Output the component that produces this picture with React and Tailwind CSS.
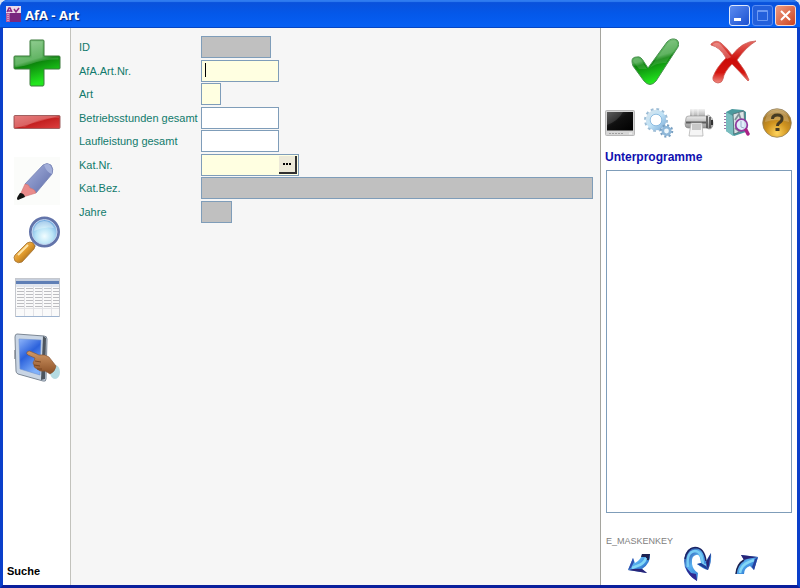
import React from "react";

function Gradients() {
  return (
    <svg className="absolute h-0 w-0" aria-hidden="true">
      <defs>
        <linearGradient id="green" x1="0" y1="0" x2="0.3" y2="1">
          <stop offset="0" stopColor="#8ccb8c" />
          <stop offset="0.5" stopColor="#4aa94c" />
          <stop offset="0.58" stopColor="#0c850c" />
          <stop offset="1" stopColor="#22e61e" />
        </linearGradient>
        <linearGradient id="red" x1="0" y1="0" x2="1" y2="1">
          <stop offset="0" stopColor="#e06a6a" />
          <stop offset="0.48" stopColor="#d64a4a" />
          <stop offset="0.52" stopColor="#c42020" />
          <stop offset="1" stopColor="#dc4040" />
        </linearGradient>
        <linearGradient id="cross" x1="0" y1="0" x2="0" y2="1">
          <stop offset="0" stopColor="#e66a62" />
          <stop offset="0.45" stopColor="#cc0c08" />
          <stop offset="0.75" stopColor="#d41610" />
          <stop offset="1" stopColor="#f08a80" />
        </linearGradient>
        <linearGradient id="pencil" x1="0" y1="0" x2="1" y2="1">
          <stop offset="0" stopColor="#a9b4de" />
          <stop offset="0.5" stopColor="#8390c4" />
          <stop offset="1" stopColor="#5c6aa6" />
        </linearGradient>
        <radialGradient id="lens" cx="0.5" cy="0.65" r="0.6">
          <stop offset="0" stopColor="#f2fdff" />
          <stop offset="0.5" stopColor="#b9e4f7" />
          <stop offset="1" stopColor="#6aa4dc" />
        </radialGradient>
        <linearGradient id="wood" x1="0" y1="0" x2="1" y2="1">
          <stop offset="0" stopColor="#ffd488" />
          <stop offset="0.5" stopColor="#e09a2c" />
          <stop offset="1" stopColor="#73430d" />
        </linearGradient>
        <linearGradient id="screen" x1="0" y1="0" x2="0.5" y2="1">
          <stop offset="0" stopColor="#8db4fa" />
          <stop offset="0.5" stopColor="#2c62dc" />
          <stop offset="1" stopColor="#7fb0fa" />
        </linearGradient>
        <linearGradient id="skin" x1="0" y1="0" x2="0" y2="1">
          <stop offset="0" stopColor="#d39a68" />
          <stop offset="1" stopColor="#8a4f25" />
        </linearGradient>
        <linearGradient id="silver" x1="0" y1="0" x2="0" y2="1">
          <stop offset="0" stopColor="#f2f2f2" />
          <stop offset="1" stopColor="#8f8f8f" />
        </linearGradient>
        <linearGradient id="dark" x1="0" y1="0" x2="1" y2="1">
          <stop offset="0" stopColor="#484848" />
          <stop offset="0.45" stopColor="#101010" />
          <stop offset="1" stopColor="#000" />
        </linearGradient>
        <radialGradient id="gold" cx="0.5" cy="0.85" r="0.85">
          <stop offset="0" stopColor="#ffd45c" />
          <stop offset="0.45" stopColor="#cf931f" />
          <stop offset="0.8" stopColor="#a67724" />
          <stop offset="1" stopColor="#d8bd88" />
        </radialGradient>
        <linearGradient id="gear" x1="0" y1="0" x2="1" y2="1">
          <stop offset="0" stopColor="#d4e4ee" />
          <stop offset="0.5" stopColor="#c0e2f6" />
          <stop offset="1" stopColor="#86b4dc" />
        </linearGradient>
        <linearGradient id="arrow" x1="0" y1="0" x2="1" y2="1">
          <stop offset="0" stopColor="#1c2a8c" />
          <stop offset="0.4" stopColor="#58b0f0" />
          <stop offset="0.65" stopColor="#3a88da" />
          <stop offset="1" stopColor="#151a70" />
        </linearGradient>
      </defs>
    </svg>
  );
}

const PlusIcon = () => (
  <svg viewBox="0 0 48 48" className="size-12">
    <path d="M18 1h12q1 0 1 1v15h15q1 0 1 1v11q0 1-1 1H31v15q0 2-1 2H18q-1 0-1-2V30H2q-1 0-1-1V18q0-1 1-1h15V2q0-1 1-1z" fill="url(#green)" stroke="#3c7a3c" />
    <path d="M18.500 2.500h11v16h16v2Q31 20 18 25q-8 3-15.500 3V18.500h16z" fill="#fff" opacity=".14" />
  </svg>
);

const MinusIcon = () => (
  <svg viewBox="0 0 48 48" className="size-12">
    <rect x="1" y="17.500" width="46" height="13" rx="1" fill="url(#red)" stroke="#a06060" />
    <path d="M2 18h44v2Q26 19 12 29H2z" fill="#fff" opacity=".14" />
  </svg>
);

const PencilIcon = () => (
  <svg viewBox="0 0 48 48" className="size-12">
    <rect x="1" width="46" height="48" fill="#fbfcfa" />
    <path d="M12 27 30 8q4-3 8 0 3 4 1 9L23 36z" fill="url(#pencil)" stroke="#7480b2" strokeWidth=".8" />
    <path d="M31 8q6-3 8 4l0 5q-5-1-8-9z" fill="#a3afd9" />
    <path d="M12 27q4 0 5 4 5 1 6 5l-13 4-3-2z" fill="#e98b8b" stroke="#ce7474" strokeWidth=".6" />
    <path d="M7 36q4 0 5 4l-7 3q-2-1 0-4z" fill="#121212" />
  </svg>
);

const SearchIcon = () => (
  <svg viewBox="0 0 48 48" className="size-12">
    <path d="m19 26 4 4-4 4-4-4z" fill="#8792a4" />
    <path d="M14 27q3-2 6 0 3 3 1 6L9 46q-4 2-7-1-2-4 0-6z" fill="url(#wood)" stroke="#a37131" strokeWidth=".8" />
    <path d="M5 39 15 29" stroke="#ffe5a8" strokeWidth="2" />
    <circle cx="31.500" cy="16" r="14" fill="url(#lens)" stroke="#6374aa" strokeWidth="3" />
    <circle cx="31.500" cy="16" r="12.500" fill="none" stroke="#c3d5ef" />
    <path d="M21 15Q22 6 31 5q7 0 10 7-10-2-20 3z" fill="#fff" opacity=".35" />
  </svg>
);

const TableIcon = () => (
  <svg viewBox="0 0 48 48" className="size-12">
    <rect x="2.500" y="3.500" width="44" height="38" fill="#fafafa" stroke="#c5c8ce" />
    <path d="M3 4h43v2H3z" fill="#c5cedd" />
    <path d="M3 6h43v3H3z" fill="#5f7fb6" />
    <path d="M3 9h43v3H3z" fill="#e1e6ef" />
    <path d="M4 13.500h42M4 16.500h42M4 19.500h42M4 22.500h42M4 25.500h42M4 28.500h42M4 31.500h42" stroke="#bdbdc1" strokeDasharray="7 2" />
    <path d="M11.500 10v31M20.500 10v31M29.500 10v31M38.500 10v31M3 33.500h43" stroke="#e2e2e6" />
    <path d="M3 41.500h43" stroke="#9eb4d0" />
  </svg>
);

const TabletIcon = () => (
  <svg viewBox="0 0 48 52" className="h-13 w-12">
    <path d="M1 18h3v9H1z" fill="#a7aab0" />
    <path d="m4 2 27 2q3 0 3 3l-1 40q0 3-3 2L5 42q-2-1-2-3L2 5q0-3 2-3z" fill="#c9d5e4" stroke="#7d8895" />
    <path d="m30 4 3 2-1 41-4 1z" fill="#4d555e" />
    <path d="m6 7 22 1-1 35-20-6z" fill="url(#screen)" stroke="#6f92d0" strokeWidth=".6" />
    <ellipse cx="42" cy="40" rx="5" ry="7" fill="#b4dbe2" />
    <path d="M14 20q2-2 5 0l7 3q6-1 10 2l7 9q-1 6-6 8-3-2-5-3-5 1-8-2-4-2-3-4-2-2 0-4l1-3-7-3q-2-1-1-3z" fill="url(#skin)" stroke="#835130" strokeWidth=".6" />
    <path d="m22 29 6 1m-7 3 6 1m-3 3 5 0" stroke="#6d3d1c" strokeWidth=".8" />
  </svg>
);

const CheckIcon = () => (
  <svg viewBox="0 0 48 48" className="size-12">
    <path d="M1 23q0-4 5-4 4-1 7 5l4 6L36 4q5-5 10-2 4 4-1 10L25 43q-6 7-12 0L2 28q-1-3-1-5z" fill="url(#green)" stroke="#4a9150" />
    <path d="M2 23q1-3 4-3 4 0 6 5l4 6h2L37 5q4-4 8-2 3 4-1 8l-9 14q-9-1-18 6l-9 0z" fill="#fff" opacity=".12" />
  </svg>
);

const CrossIcon = () => (
  <svg viewBox="0 0 48 48" className="size-12">
    <path d="M2 6q5-5 10-1 6 5 11 12Q34 3 47 3 37 9 28 22q9 11 12 20l-1 1Q31 34 23 26q-8 8-9 15-1 4-5 4-6-1-5-6 3-9 13-19Q11 9 2 7z" fill="url(#cross)" stroke="#cb5c56" strokeWidth=".8" />
    <path d="M4 6q5-3 8 1l10 12-4 2Q12 11 4 7z" fill="#fff" opacity=".25" />
  </svg>
);

const MonitorIcon = () => (
  <svg viewBox="0 0 30 30" className="size-7.5">
    <rect x=".5" y="2.500" width="29" height="25" rx="1" fill="#d6d6d6" stroke="#b8b8b8" />
    <rect x="2" y="4" width="26" height="18.500" fill="url(#dark)" />
    <path d="M2 4h16Q13 13 2 17z" fill="#fff" opacity=".12" />
    <path d="M4 25.500h14" stroke="#a0a0a0" strokeDasharray="2 1" />
    <path d="M24 25.500h3" stroke="#eee" strokeWidth="2" />
  </svg>
);

const GearsIcon = () => (
  <svg viewBox="0 0 30 30" className="size-7.5">
    <circle cx="12" cy="12" r="10.500" fill="none" stroke="#9dbdd6" strokeWidth="3" strokeDasharray="2.700 2.800" />
    <circle cx="12" cy="12" r="8" fill="none" stroke="url(#gear)" strokeWidth="4.500" />
    <circle cx="12" cy="12" r="5.800" fill="none" stroke="#7db2dc" strokeWidth=".8" />
    <circle cx="22.500" cy="23" r="5.500" fill="none" stroke="#7aa0c2" strokeWidth="2.500" strokeDasharray="2 2.300" />
    <circle cx="22.500" cy="23" r="3.700" fill="#eef7fc" stroke="#8fb7d8" strokeWidth="2.600" />
  </svg>
);

const PrinterIcon = () => (
  <svg viewBox="0 0 30 30" className="size-7.500 size-7.5">
    <path d="M6 1h15v11H6z" fill="url(#silver)" />
    <path d="M9 1v10m5-10v10" stroke="#fff" opacity=".6" />
    <path d="M2 10q0-2 3-2h17q2-2 4 0 3 2 3 7 0 6-4 6l-3-1H4q-3 0-3-4z" fill="url(#silver)" stroke="#888" strokeWidth=".6" />
    <path d="M2 14.500h20" stroke="#5c5c5c" strokeWidth="2" />
    <path d="M23 8v12m3-11v11" stroke="#484848" strokeWidth="1.500" />
    <path d="M27 12h2v5h-2z" fill="#333" />
    <path d="M7 15h11l1 13H5z" fill="#f5f5f5" stroke="#aaa" strokeWidth=".7" />
    <path d="M8 16h9v6H8z" fill="#c8c8c8" />
  </svg>
);

const ArchiveIcon = () => (
  <svg viewBox="0 0 30 30" className="size-7.5">
    <path d="m3 4 6-3 11 1 3 2v20l-12 4-8-5z" fill="#4b9a9e" />
    <path d="m3 4 7 4v20l-7-5z" fill="#79bdbf" />
    <path d="m10 6 11-3 1 19-11 4z" fill="#dde4e6" stroke="#507078" strokeWidth=".9" />
    <path d="m12 12 4-6 2 6m-6 8 5 4" stroke="#7d9098" fill="none" strokeWidth="1.800" />
    <path d="M2 5v18" stroke="#9b73a4" strokeDasharray="1 2" strokeWidth="2" />
    <circle cx="18.500" cy="17" r="5.800" fill="#e3effd" fillOpacity=".85" stroke="#903b9f" strokeWidth="1.800" />
    <path d="M18 13v6l3 1" stroke="#9caecb" fill="none" />
    <path d="m23 22 2 4" stroke="#a92286" strokeWidth="3.500" strokeLinecap="round" />
  </svg>
);

const HelpIcon = () => (
  <svg viewBox="0 0 30 30" className="size-7.5">
    <circle cx="15" cy="15" r="14.300" fill="url(#gold)" stroke="#94805a" strokeWidth=".8" />
    <path d="M3 14Q4 3 15 3t12 11Q15 10 3 14z" fill="#fff" opacity=".2" />
    <path d="M10.500 11q0-4 5-4t4.500 4q0 2-3 4-1.500 1-1.500 3" fill="none" stroke="#453a23" strokeWidth="3" />
    <rect x="13.500" y="20" width="4" height="3" fill="#453a23" />
  </svg>
);

const BackIcon = () => (
  <svg viewBox="0 0 24 24" className="size-6">
    <path d="M15 2h8q1 9-8 15l5 4L1 18 6 6l2 5q6-3 7-9z" fill="url(#arrow)" />
    <path d="M15 2h8l-1 6q-3 1-3-3h-5z" fill="#1b2050" />
    <path d="M19 6q-2 6-9 8l-5 2" fill="none" stroke="#84d8f6" strokeWidth="2.500" />
    <path d="M1 18q8-2 14-1l5 4z" fill="#292477" />
    <path d="M1 18 6 6l1 4-3 6z" fill="#2f4fae" />
  </svg>
);

const TurnIcon = () => (
  <svg viewBox="0 0 30 36" className="h-9 w-7.5">
    <path d="M14 35Q1 27 1 15 2 2 12 1q9 0 11 14l5-8q1 9-3 17-5-1-11-6l4-1Q17 7 13 9q-5 1-4 9 1 6 6 9z" fill="url(#arrow)" />
    <path d="M2 13Q4 2 12 1.500q9 0 11 13.500" fill="none" stroke="#1c2463" strokeWidth="1.500" />
    <path d="M5 21Q3 6 12 5q7 0 8 14l3 0" fill="none" stroke="#78ccf4" strokeWidth="2.500" />
    <path d="M14 35Q5 30 2 20l6 7 5 1z" fill="#302a92" />
    <path d="m28 7-3 17-2-8z" fill="#292477" />
    <path d="m14 18 11 6-2-4-5-3z" fill="#1e3f98" />
  </svg>
);

const ForwardIcon = () => (
  <svg viewBox="0 0 24 24" className="size-6">
    <path d="M1 22q1-10 8-14L6 3l17 2-4 13-4-4q-6 2-6 8z" fill="url(#arrow)" />
    <path d="M1 22q1-10 8-14" fill="none" stroke="#1b2050" strokeWidth="1.500" />
    <path d="M5 21q1-8 9-11l5-2" fill="none" stroke="#84d8f6" strokeWidth="2.500" />
    <path d="m6 3 17 2-11 2-3 1z" fill="#292477" />
    <path d="m23 5-4 13-2-3 3-8z" fill="#2742a0" />
  </svg>
);

const fields = [
  { id: "id", label: "ID", look: "w-[70px] bg-[#c0c0c0]", readOnly: true },
  { id: "nr", label: "AfA.Art.Nr.", look: "w-[78px] bg-[#ffffe1]", caret: true },
  { id: "art", label: "Art", look: "w-5 bg-[#ffffe1]" },
  { id: "stunden", label: "Betriebsstunden gesamt", look: "w-[78px] bg-white" },
  { id: "leistung", label: "Laufleistung gesamt", look: "w-[78px] bg-white" },
  { id: "katnr", label: "Kat.Nr.", look: "w-[98px] bg-[#ffffe1]", picker: true },
  { id: "katbez", label: "Kat.Bez.", look: "w-full bg-[#c0c0c0]", readOnly: true },
  { id: "jahre", label: "Jahre", look: "w-[31px] bg-[#c0c0c0]", readOnly: true },
];

function Field({ id, label, look, readOnly, caret, picker }) {
  return (
    <div className="flex items-start">
      <label htmlFor={id} className="w-[122px] shrink-0 whitespace-nowrap text-[11px] leading-[22px] text-[#117a6c]">
        {label}
      </label>
      <div className={`relative flex h-[22px] min-w-0 border border-[#7f9db9] ${look}`}>
        <input id={id} readOnly={readOnly} className="w-full min-w-0 flex-1 bg-transparent px-1 text-[11px] outline-none" />
        {caret && <span className="absolute top-[2px] left-[3px] h-3.5 w-px bg-black" />}
        {picker && (
          <button
            aria-label="Auswahl"
            className="my-px mr-px flex w-[18px] shrink-0 items-center justify-center border-r-2 border-b-2 border-[#303030] bg-[#ece9d8]"
          >
            <svg viewBox="0 0 8 2" className="h-0.5 w-2">
              <path d="M0 0h2v2H0zM3 0h2v2H3zM6 0h2v2H6z" />
            </svg>
          </button>
        )}
      </div>
    </div>
  );
}

function IconButton({ label, children, size }) {
  return (
    <button aria-label={label} className={`flex shrink-0 items-center justify-center ${size}`}>
      {children}
    </button>
  );
}

function TitleBar() {
  const box = "flex size-[21px] items-center justify-center rounded-[3px] border";
  return (
    <header className="flex h-7 shrink-0 items-center bg-linear-to-b from-[#0a50d8] via-[#0458ea] to-[#0660f4] pr-1 pl-1.5 shadow-[inset_0_2px_1px_#2f7cf0,inset_0_-1px_0_#0646c4]">
      <svg viewBox="0 0 15 16" className="h-4 w-[15px]">
        <path d="M0 0h15v16H0z" fill="#78277f" />
        <path d="M0 0h15v7H0z" fill="#eadbea" />
        <path d="m1 6 2-4h1l2 4M2 5h4m2-2 2 3 3-4" fill="none" stroke="#8b2a83" strokeWidth="1.500" />
        <path d="M0 7h4v9H0z" fill="#b65b9c" />
        <path d="M2 8v7" stroke="#eadbea" strokeDasharray="1 1" />
      </svg>
      <h1 className="ml-1 flex-1 pt-0.5 font-['Open_Sans',sans-serif] text-[13px] leading-5 font-bold text-white [text-shadow:1px_1px_1px_#0a2a80]">
        AfA - Art
      </h1>
      <div className="flex gap-0.5 pt-0.5">
        <button aria-label="Minimieren" className={`${box} border-[#dfe8fb] bg-linear-to-br from-[#5c8cf0] to-[#1c4fd0]`}>
          <svg viewBox="0 0 19 19" className="size-[19px]"><path d="M4 12h7v3H4z" fill="#fff" /></svg>
        </button>
        <button aria-label="Maximieren" className={`${box} border-[#5b8ef2] bg-[#2360dc]`}>
          <svg viewBox="0 0 19 19" className="size-[19px]"><path d="M4.500 4.500h10v10h-10zM4 5.500h11" fill="none" stroke="#6c9af4" /></svg>
        </button>
        <button aria-label="Schließen" className={`${box} border-[#f5dcd6] bg-linear-to-br from-[#ec9a80] to-[#cc4018]`}>
          <svg viewBox="0 0 19 19" className="size-[19px]"><path d="m5 5 9 9m0-9-9 9" stroke="#fff" strokeWidth="2" /></svg>
        </button>
      </div>
    </header>
  );
}

export default function App() {
  return (
    <div className="h-screen bg-[#d5e3f5] font-['Liberation_Sans',Arial,sans-serif]">
      <Gradients />
      <div className="flex h-full flex-col overflow-hidden rounded-t-lg bg-[#0458ea]">
        <TitleBar />
        <main className="flex min-h-0 flex-1 border-x-3 border-b-3 border-x-[#0a3fca] border-b-[#0a1f9c] bg-white">
          <nav className="flex w-[68px] shrink-0 flex-col items-center border-r border-[#c2c2bc] pt-[11px] pb-2">
            <div className="flex flex-1 flex-col gap-[11px]">
              <IconButton label="Neu" size="size-12"><PlusIcon /></IconButton>
              <IconButton label="Löschen" size="size-12"><MinusIcon /></IconButton>
              <IconButton label="Bearbeiten" size="size-12"><PencilIcon /></IconButton>
              <IconButton label="Suchen" size="size-12"><SearchIcon /></IconButton>
              <IconButton label="Tabelle" size="size-12"><TableIcon /></IconButton>
              <IconButton label="Auswählen" size="size-12"><TabletIcon /></IconButton>
            </div>
            <p className="w-full pl-1 text-[11px] leading-3 font-bold text-black">Suche</p>
          </nav>

          <form className="min-w-0 flex-1 bg-[#f6f6f6] pt-2 pr-[7px] pl-2">
            <div className="grid h-47 auto-rows-fr">
              {fields.map((f) => <Field key={f.id} {...f} />)}
            </div>
          </form>

          <aside className="flex w-[197px] shrink-0 flex-col border-l border-[#a5a59e] pt-2.5 pr-[5px] pb-1 pl-1">
            <div className="flex justify-center gap-[30px] pr-2.5">
              <IconButton label="OK" size="size-12"><CheckIcon /></IconButton>
              <IconButton label="Abbrechen" size="size-12"><CrossIcon /></IconButton>
            </div>
            <div className="mt-[22px] flex justify-between">
              <IconButton label="Bildschirm" size="size-7.5"><MonitorIcon /></IconButton>
              <IconButton label="Einstellungen" size="size-7.5"><GearsIcon /></IconButton>
              <IconButton label="Drucken" size="size-7.5"><PrinterIcon /></IconButton>
              <IconButton label="Archiv" size="size-7.5"><ArchiveIcon /></IconButton>
              <IconButton label="Hilfe" size="size-7.5"><HelpIcon /></IconButton>
            </div>
            <label htmlFor="programs" className="mt-[11px] text-xs leading-4 font-bold text-[#1010b0]">Unterprogramme</label>
            <select id="programs" size="4" className="mt-[5px] ml-px min-h-0 flex-1 appearance-none border border-[#7f9db9] bg-white outline-none" />
            <p className="mt-[22px] pl-px text-[9px] leading-3 text-[#808080]">E_MASKENKEY</p>
            <div className="flex h-[34px] items-center pl-[22px]">
              <IconButton label="Zurück" size="size-6"><BackIcon /></IconButton>
              <div className="ml-8 flex items-center gap-[22px]">
                <IconButton label="Wiederholen" size="h-9 w-7.5"><TurnIcon /></IconButton>
                <IconButton label="Weiter" size="size-6"><ForwardIcon /></IconButton>
              </div>
            </div>
          </aside>
        </main>
      </div>
    </div>
  );
}
